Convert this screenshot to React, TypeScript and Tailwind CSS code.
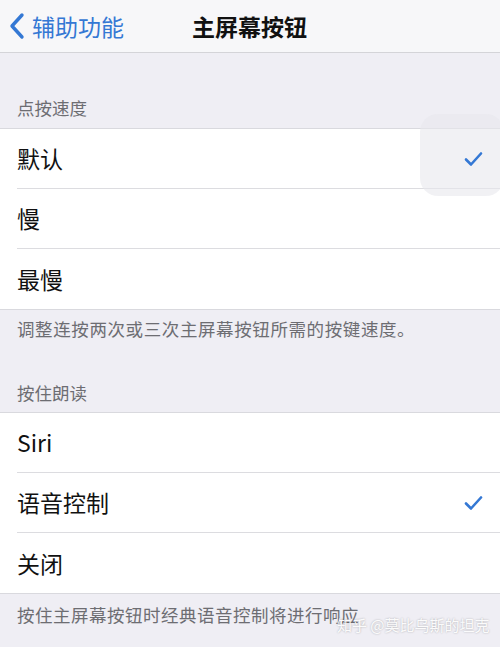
const font = { fontFamily: '"Noto Sans CJK SC", "Noto Sans", sans-serif' };

type Row = { label: string; checked?: boolean };

function Check() {
  return (
    <svg className="relative z-10" width="19" height="16" viewBox="0 0 19 16" fill="none">
      <path d="M2 8.5 L7 13.5 L17 2.5" stroke="#3478d4" strokeWidth="2.6" strokeLinecap="round" strokeLinejoin="round" />
    </svg>
  );
}

function Group({ rows }: { rows: Row[] }) {
  return (
    <div className="border-y border-[#d9d9de] bg-white">
      {rows.map((row, i) => (
        <div key={row.label} className="pl-[17px]">
          <div
            className={`flex h-[60px] items-center justify-between pr-[17px] ${
              i < rows.length - 1 ? "border-b border-[#dcdce0]" : ""
            }`}
          >
            <span className="text-[23px] text-[#111]">{row.label}</span>
            {row.checked && <Check />}
          </div>
        </div>
      ))}
    </div>
  );
}

export default function App() {
  return (
    <div className="relative h-[647px] w-[500px] overflow-hidden bg-[#efeef4]" style={font}>
      <div className="flex h-[53px] items-center border-b border-[#d4d4d8] bg-[#f7f7f9]">
        <div className="flex w-[150px] items-center pl-[8px] text-[#3478d4]">
          <svg width="18" height="28" viewBox="0 0 18 28" fill="none">
            <path d="M14 3 L4 14 L14 25" stroke="#3478d4" strokeWidth="3.4" strokeLinecap="round" strokeLinejoin="round" />
          </svg>
          <span className="ml-[6px] text-[23px]">辅助功能</span>
        </div>
        <span className="ml-[42px] text-[23px] font-bold text-[#111]">主屏幕按钮</span>
      </div>

      <div className="px-[17px] pb-[8px] pt-[43px] text-[17.5px] leading-[24px] text-[#6d6d72]">点按速度</div>
      <Group rows={[{ label: "默认", checked: true }, { label: "慢" }, { label: "最慢" }]} />
      <div className="px-[17px] pt-[7px] text-[17.5px] leading-[24px] tracking-[0.6px] text-[#6d6d72]">
        调整连按两次或三次主屏幕按钮所需的按键速度。
      </div>

      <div className="px-[17px] pb-[7px] pt-[40px] text-[17.5px] leading-[24px] text-[#6d6d72]">按住朗读</div>
      <Group rows={[{ label: "Siri" }, { label: "语音控制", checked: true }, { label: "关闭" }]} />
      <div className="px-[17px] pt-[9px] text-[17.5px] leading-[24px] tracking-[0.5px] text-[#6d6d72]">
        按住主屏幕按钮时经典语音控制将进行响应
      </div>

      <div className="absolute left-[420px] top-[114px] h-[82px] w-[84px] rounded-[18px] bg-[#e8e8ec]/60" />
      <div className="absolute left-[337px] top-[614px] text-[15px] leading-[22px] text-white/95 [text-shadow:0_0_2px_rgba(0,0,0,0.3)]">
        知乎 @莫比乌斯的坦克
      </div>
    </div>
  );
}
